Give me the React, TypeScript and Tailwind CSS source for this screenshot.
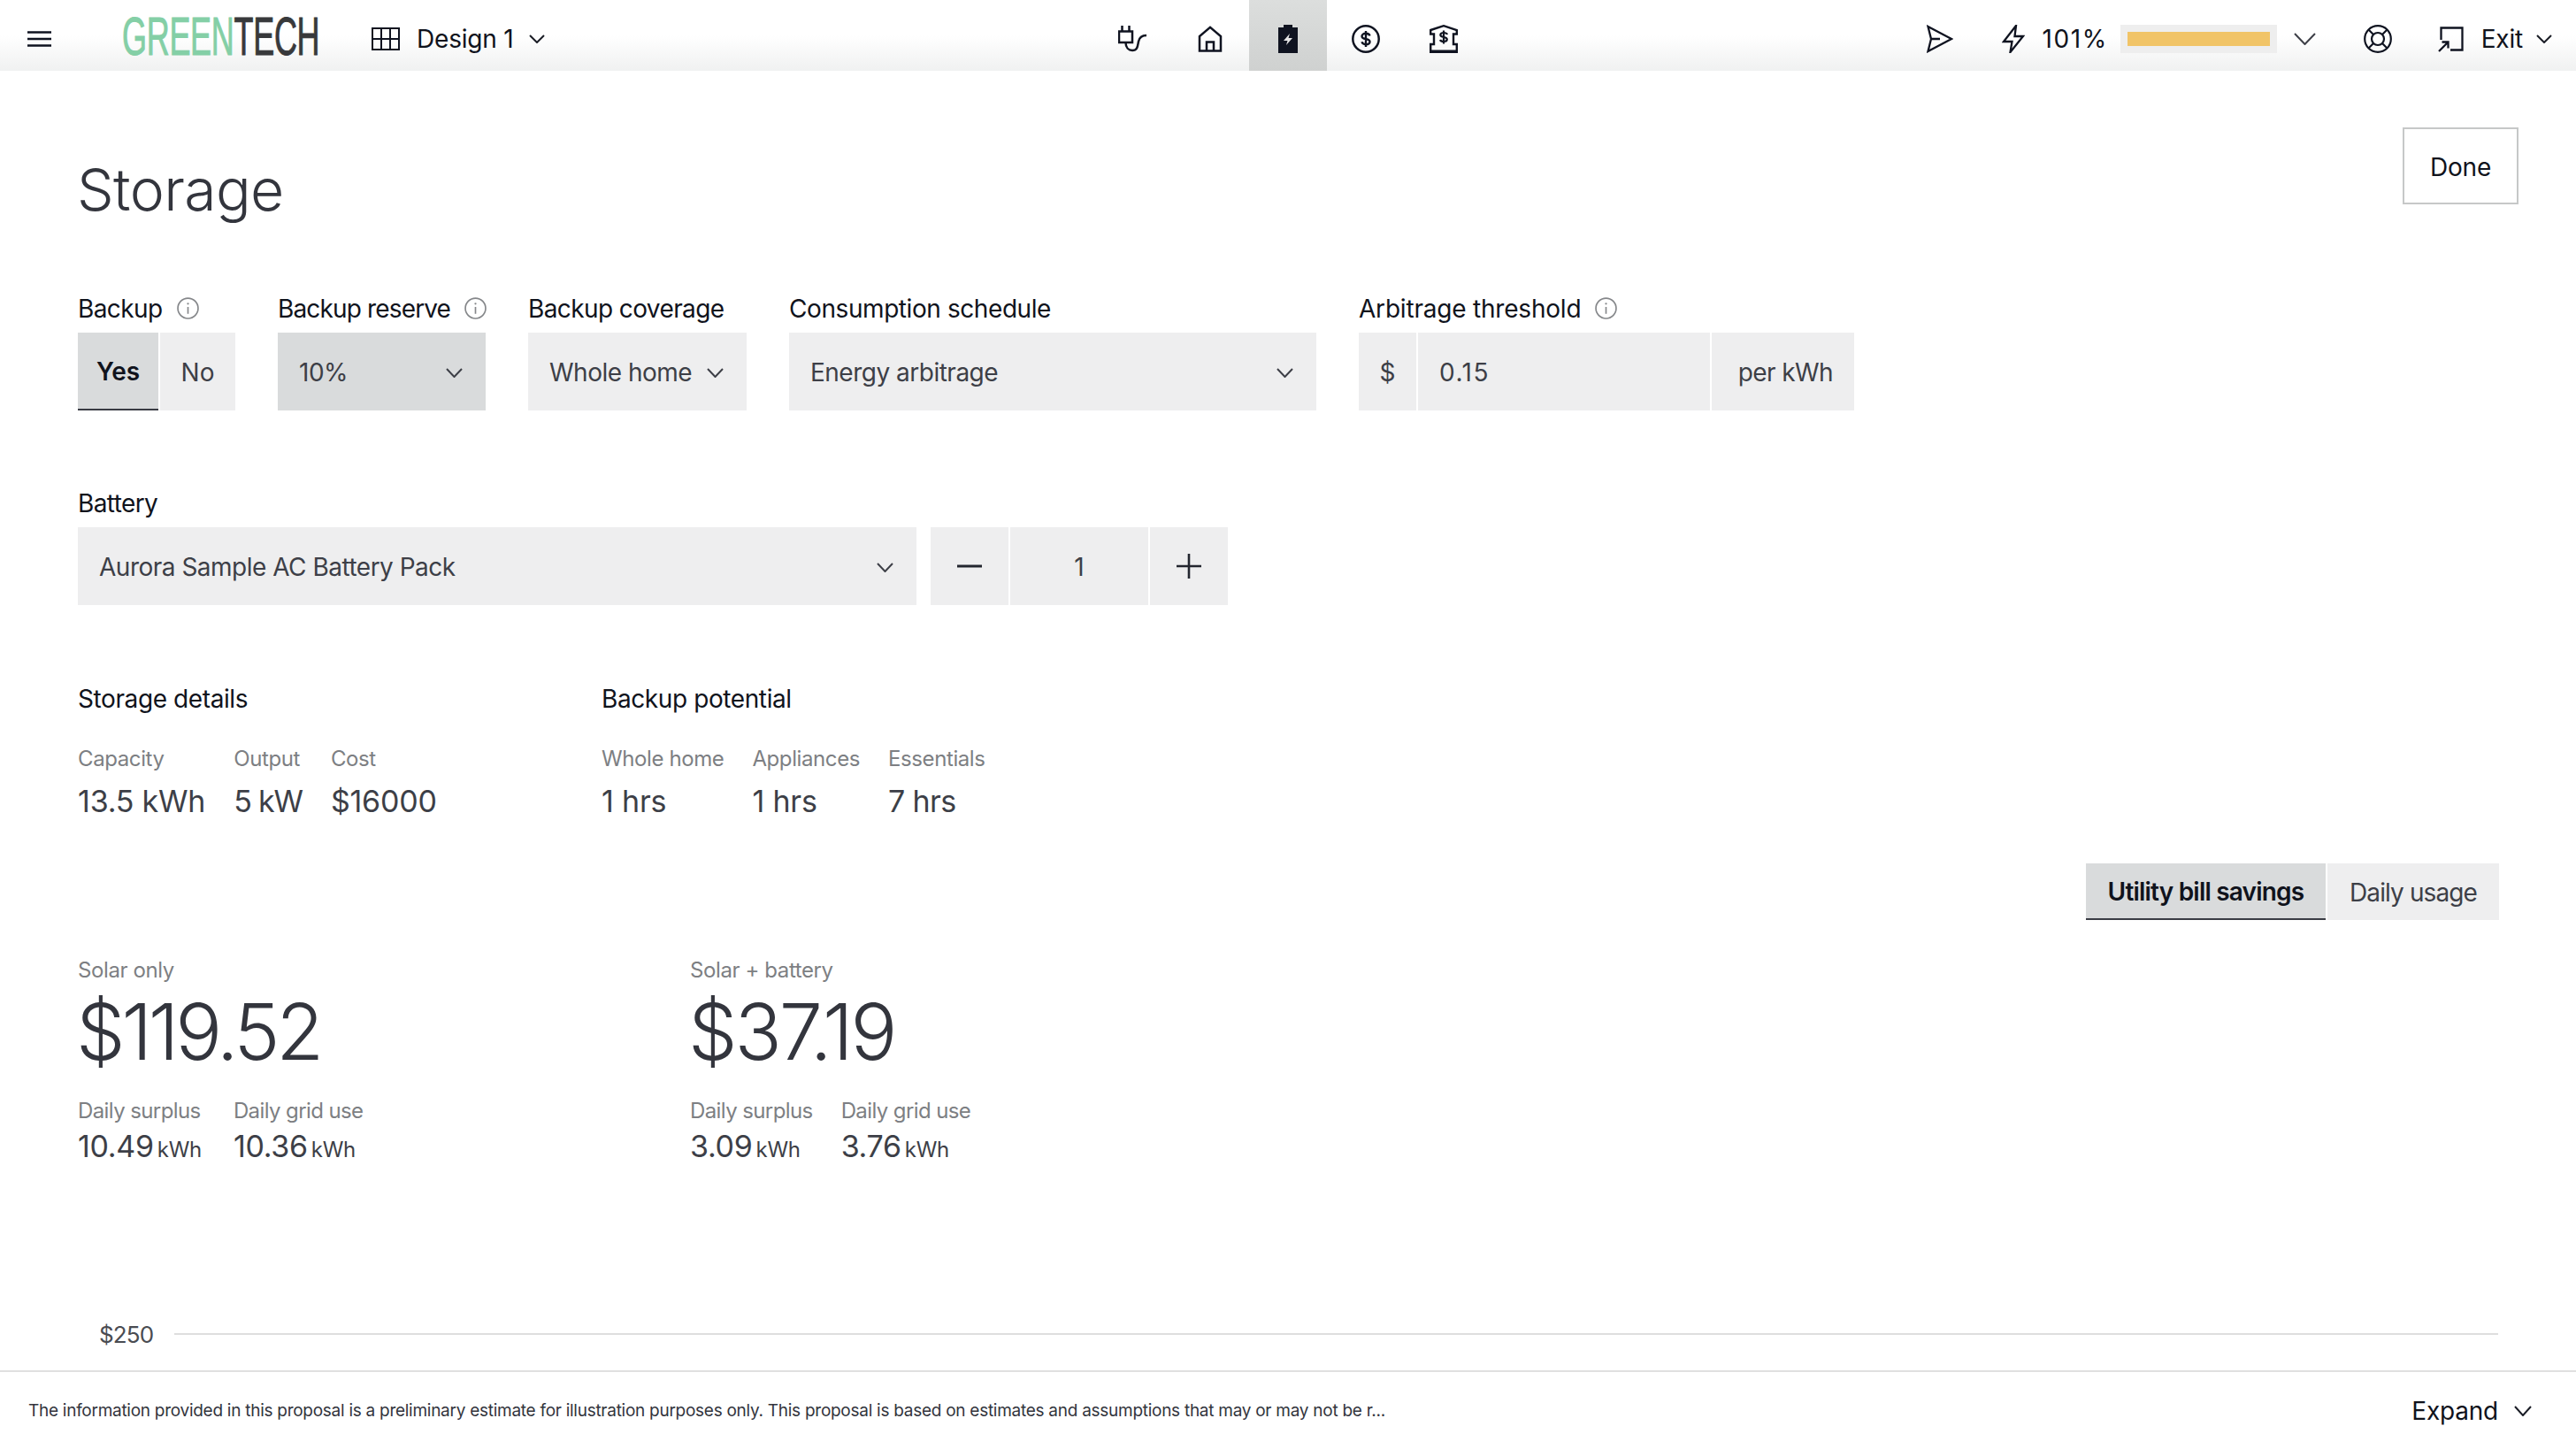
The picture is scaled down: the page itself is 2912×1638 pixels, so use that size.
import React from "react";

const F = "font-['Inter','Noto_Sans',sans-serif]";

function Chevron({ w = 18, h = 10, color = "#1a1d26", sw = 2 }: { w?: number; h?: number; color?: string; sw?: number }) {
  return (
    <svg width={w} height={h} viewBox={`0 0 ${w} ${h}`} fill="none" className="shrink-0">
      <path d={`M1 1L${w / 2} ${h - 1}L${w - 1} 1`} stroke={color} strokeWidth={sw} />
    </svg>
  );
}

function Info() {
  return (
    <svg width="25" height="25" viewBox="0 0 24 24" fill="none" className="shrink-0">
      <circle cx="12" cy="12" r="11" stroke="#85878a" strokeWidth="1.6" />
      <path d="M12 10.5V18" stroke="#85878a" strokeWidth="1.6" />
      <circle cx="12" cy="7" r="1.1" fill="#85878a" />
    </svg>
  );
}

const Label = ({ text, info, track = "tracking-[-0.6px]" }: { text: string; info?: boolean; track?: string }) => (
  <div className={`h-[35px] mb-[9px] flex items-center gap-[16px] text-[28px] leading-[35px] text-[#10131c] ${track} whitespace-nowrap`}>
    <span>{text}</span>
    {info && <span className="-mt-[3px] flex"><Info /></span>}
  </div>
);

const Sel = ({ text, w, dark }: { text: string; w: string; dark?: boolean }) => (
  <div className={`${w} h-[88px] ${dark ? "bg-[#d9dbdc]" : "bg-[#eeeeef]"} flex items-center justify-between pl-[24px] pr-[26px] pt-[2px] text-[28px] text-[#3d3f47] tracking-[-0.5px] whitespace-nowrap`}>
    <span>{text}</span>
    <Chevron w={19} h={11} color="#3d3f47" />
  </div>
);

const Stat = ({ label, value, track = "tracking-[-0.2px]" }: { label: string; value: string; track?: string }) => (
  <div className="flex flex-col">
    <div className="h-[32px] leading-[32px] text-[24px] text-[#7d7f83] tracking-[-0.4px] whitespace-nowrap">{label}</div>
    <div className={`mt-[12px] h-[40px] leading-[40px] text-[34px] text-[#3d3f47] ${track} whitespace-nowrap`}>{value}</div>
  </div>
);

const Small = ({ label, value }: { label: string; value: string }) => (
  <div className="flex flex-col">
    <div className="h-[32px] leading-[32px] text-[24px] text-[#7d7f83] tracking-[-0.6px] whitespace-nowrap">{label}</div>
    <div className="mt-[4px] h-[40px] leading-[40px] text-[34px] text-[#3d3f47] tracking-[-0.3px] whitespace-nowrap">
      {value}
      <span className="ml-[4px] text-[24px] tracking-[-0.3px]">kWh</span>
    </div>
  </div>
);

const Summary = ({ title, amount, a, b, track, gap }: { title: string; amount: string; a: string; b: string; track: string; gap: string }) => (
  <div className="w-[692px] shrink-0">
    <div className="h-[32px] leading-[32px] text-[24px] text-[#7d7f83] tracking-[-0.4px]">{title}</div>
    <div className={`mt-[7px] -ml-[2px] h-[92px] leading-[92px] text-[88px] font-light text-[#33353d] ${track} whitespace-nowrap`}>{amount}</div>
    <div className={`mt-[28px] flex ${gap}`}>
      <Small label="Daily surplus" value={a} />
      <Small label="Daily grid use" value={b} />
    </div>
  </div>
);

const ink = "#0f1320";

const NavTab = ({ active, children }: { active?: boolean; children: React.ReactNode }) => (
  <div className={`w-[88px] h-[80px] pt-[8px] flex items-center justify-center ${active ? "bg-gradient-to-b from-[#dcdedd] to-[#cfd1d0]" : ""}`}>{children}</div>
);

export default function App() {
  return (
    <div className={`${F} w-[2912px] h-[1638px] bg-white flex flex-col overflow-hidden`}>
      <header className="h-[80px] shrink-0 flex items-center bg-gradient-to-b from-white from-50% to-[#f0f1f1]">
        <div className="w-[1236px] shrink-0 flex items-center pl-[31px] pt-[8px]">
          <svg width="27" height="18" viewBox="0 0 27 18" fill="none">
            <path d="M0 1.5H27M0 9H27M0 16.5H27" stroke={ink} strokeWidth="2.5" />
          </svg>
          <div className="ml-[80px] w-[222px] h-[62px] -mt-[7px] overflow-visible">
            <div className="font-['Liberation_Sans',sans-serif] origin-left scale-x-[0.59] text-[61px] leading-[62px] tracking-[-0.5px] whitespace-nowrap [-webkit-text-stroke:1px_currentColor]">
              <span className="text-[#84cfa6]">GREEN</span>
              <span className="text-[#38393b]">TECH</span>
            </div>
          </div>
          <svg width="32" height="26" viewBox="0 0 32 26" fill="none" className="ml-[60px]">
            <path d="M1 1H31V25H1ZM11 1V25M21 1V25M1 13H31" stroke={ink} strokeWidth="2" />
          </svg>
          <span className="ml-[19px] text-[28px] text-[#10131c] tracking-[-0.2px] whitespace-nowrap">Design 1</span>
          <span className="ml-[18px] flex"><Chevron /></span>
        </div>

        <NavTab>
          <svg width="32" height="32" viewBox="0 0 32 32" fill="none">
            <path d="M1 7.5H16V20H1ZM4.5 1V7.5M12.5 1V7.5" stroke={ink} strokeWidth="2.5" />
            <path d="M8.5 20C8.5 26 12 29 16 29C22 29 22 24 23 19C24 14 27 12 32 12" stroke={ink} strokeWidth="2.5" />
          </svg>
        </NavTab>
        <NavTab>
          <svg width="28" height="30" viewBox="0 0 28 30" fill="none">
            <path d="M2 28.5V12L14 1.8L26 12V28.5ZM10 28.5V18.5H18V28.5" stroke={ink} strokeWidth="2.5" />
          </svg>
        </NavTab>
        <NavTab active>
          <svg width="22" height="32" viewBox="0 0 22 32">
            <path d="M6 0H16V3H22V32H0V3H6Z" fill={ink} />
            <path d="M13 10L6 18H10.5L9 23L16 15H11.5Z" fill="#e6e6e6" />
          </svg>
        </NavTab>
        <NavTab>
          <svg width="32" height="32" viewBox="0 0 32 32" fill="none">
            <circle cx="16" cy="16" r="14.7" stroke={ink} strokeWidth="2.5" />
            <path d="M20.5 12.5C20 10.5 18 9.8 16 9.8C13.5 9.8 11.5 11 11.5 13C11.5 17.5 20.5 14.8 20.5 19C20.5 21 18.5 22.2 16 22.2C13.8 22.2 12 21.3 11.5 19.3M16 7V25" stroke={ink} strokeWidth="2.4" />
          </svg>
        </NavTab>
        <NavTab>
          <svg width="32" height="32" viewBox="0 0 32 32" fill="none">
            <path d="M1.2 6L16 1.2L30.8 6V10.5H27V22H30.8V30.8H1.2V22H5V10.5H1.2Z" stroke={ink} strokeWidth="2.4" />
            <path d="M1 30H31" stroke={ink} strokeWidth="3" />
            <path d="M20 11C19.5 9.5 18 9 16 9C14 9 12.3 10 12.3 11.5C12.3 15 19.8 13 19.8 16.5C19.8 18 18 19 16 19C14 19 12.5 18.3 12 17M16 6.5V21.5" stroke={ink} strokeWidth="2.2" />
          </svg>
        </NavTab>

        <div className="flex-1 flex items-center justify-end pr-[27px] pt-[8px]">
          <svg width="30" height="32" viewBox="0 0 30 32" fill="none">
            <path d="M1.5 2L28 16L1.5 30L5 16ZM5 16H15" stroke={ink} strokeWidth="2.3" />
          </svg>
          <svg width="26" height="32" viewBox="0 0 26 32" fill="none" className="ml-[55px]">
            <path d="M16 1L2 19H11.5L9.5 31L24 13H14.5Z" stroke={ink} strokeWidth="2.3" />
          </svg>
          <span className="ml-[19px] text-[28px] text-[#10131c] tracking-[1.6px] whitespace-nowrap">101%</span>
          <div className="ml-[14px] w-[177px] h-[32px] bg-[#eeeeee] flex items-center justify-center">
            <div className="w-[161px] h-[16px] bg-[#f1c467]" />
          </div>
          <span className="ml-[19px] flex"><Chevron w={25} h={14} color="#3d3f47" /></span>
          <svg width="32" height="32" viewBox="0 0 32 32" fill="none" className="ml-[54px]">
            <circle cx="16" cy="16" r="14.8" stroke={ink} strokeWidth="2.2" />
            <circle cx="16" cy="16" r="7" stroke={ink} strokeWidth="2.2" />
            <path d="M5.5 5.5L11 11M26.5 5.5L21 11M5.5 26.5L11 21M26.5 26.5L21 21" stroke={ink} strokeWidth="2.2" />
          </svg>
          <svg width="29" height="29" viewBox="0 0 29 29" fill="none" className="ml-[52px]">
            <path d="M3.5 15V1.5H27.5V26.5H14" stroke={ink} strokeWidth="2.3" />
            <path d="M1 28L11 18M4.5 17.5H11.5V24.5" stroke={ink} strokeWidth="2.3" />
          </svg>
          <span className="ml-[20px] text-[28px] text-[#10131c] tracking-[-0.2px]">Exit</span>
          <span className="ml-[15px] flex"><Chevron /></span>
        </div>
      </header>

      <main className="flex-1 overflow-hidden pl-[88px] pr-[65px]">
        <div className="h-[151px] pt-[64px] flex justify-between items-start">
          <h1 className="mt-[30px] -ml-[1px] text-[66px] leading-[80px] font-light text-[#33353d] tracking-[-0.6px]">Storage</h1>
          <button className="w-[131px] h-[87px] pt-[2px] border-2 border-[#c6c8c8] bg-white text-[28px] text-[#10131c] tracking-[-0.2px]">Done</button>
        </div>

        <div className="mt-[101px] flex gap-[48px]">
          <div className="w-[178px]">
            <Label text="Backup" info />
            <div className="flex gap-[2px] h-[88px] text-[28px]">
              <div className="w-[91px] pt-[2px] bg-[#d9dbdc] border-b-2 border-[#3a3c44] flex items-center justify-center font-semibold text-[#10131c]">Yes</div>
              <div className="w-[85px] pt-[2px] bg-[#eeeeef] flex items-center justify-center text-[#3d3f47]">No</div>
            </div>
          </div>
          <div className="w-[235px]">
            <Label text="Backup reserve" info track="tracking-[-0.85px]" />
            <Sel text="10%" w="w-[235px]" dark />
          </div>
          <div className="w-[247px]">
            <Label text="Backup coverage" />
            <Sel text="Whole home" w="w-[247px]" />
          </div>
          <div className="w-[596px]">
            <Label text="Consumption schedule" track="tracking-[-0.42px]" />
            <Sel text="Energy arbitrage" w="w-[596px]" />
          </div>
          <div className="w-[560px]">
            <Label text="Arbitrage threshold" info track="tracking-[-0.2px]" />
            <div className="flex gap-[2px] h-[88px] text-[28px] text-[#3d3f47]">
              <div className="w-[65px] pt-[2px] bg-[#eeeeef] flex items-center justify-center">$</div>
              <div className="w-[330px] pt-[2px] bg-[#eeeeef] flex items-center pl-[24px] tracking-[1.5px]">0.15</div>
              <div className="w-[161px] pt-[2px] pr-[24px] bg-[#eeeeef] flex items-center justify-end tracking-[-0.6px]">per kWh</div>
            </div>
          </div>
        </div>

        <div className="mt-[88px]">
          <Label text="Battery" />
          <div className="flex gap-[16px]">
            <Sel text="Aurora Sample AC Battery Pack" w="w-[948px]" />
            <div className="flex gap-[2px] h-[88px] text-[28px] text-[#3d3f47]">
              <div className="w-[88px] bg-[#eeeeef] flex items-center justify-center">
                <svg width="28" height="4" viewBox="0 0 28 4"><path d="M0 2H28" stroke="#23262f" strokeWidth="3" /></svg>
              </div>
              <div className="w-[156px] pt-[2px] bg-[#eeeeef] flex items-center justify-center">1</div>
              <div className="w-[88px] bg-[#eeeeef] flex items-center justify-center">
                <svg width="28" height="28" viewBox="0 0 28 28"><path d="M0 14H28M14 0V28" stroke="#23262f" strokeWidth="2.6" /></svg>
              </div>
            </div>
          </div>
        </div>

        <div className="mt-[88px] flex">
          <div className="w-[592px] shrink-0">
            <div className="h-[36px] leading-[36px] text-[28px] text-[#10131c] tracking-[-0.4px]">Storage details</div>
            <div className="mt-[34px] flex gap-[32px]">
              <Stat label="Capacity" value="13.5 kWh" />
              <Stat label="Output" value="5 kW" track="tracking-[-1.2px]" />
              <Stat label="Cost" value="$16000" />
            </div>
          </div>
          <div>
            <div className="h-[36px] leading-[36px] text-[28px] text-[#10131c] tracking-[-0.4px]">Backup potential</div>
            <div className="mt-[34px] flex gap-[32px]">
              <Stat label="Whole home" value="1 hrs" />
              <Stat label="Appliances" value="1 hrs" />
              <Stat label="Essentials" value="7 hrs" track="tracking-[-0.6px]" />
            </div>
          </div>
        </div>

        <div className="mt-[50px] mr-[22px] flex justify-end gap-[2px] h-[64px] text-[28px]">
          <div className="w-[271px] pt-[2px] bg-[#d9dbdc] border-b-2 border-[#3a3c44] flex items-center justify-center font-semibold text-[#10131c] tracking-[-0.8px]">Utility bill savings</div>
          <div className="w-[194px] pt-[2px] bg-[#eeeeef] flex items-center justify-center text-[#3d3f47] tracking-[-0.9px]">Daily usage</div>
        </div>

        <div className="mt-[41px] flex">
          <Summary title="Solar only" amount="$119.52" a="10.49" b="10.36" track="tracking-[-4.2px]" gap="gap-[36px]" />
          <Summary title="Solar + battery" amount="$37.19" a="3.09" b="3.76" track="tracking-[-3.1px]" gap="gap-[32px]" />
        </div>

        <div className="mt-[174px] mr-[23px] h-[36px] flex items-center gap-[24px]">
          <span className="ml-[24px] text-[26px] text-[#4a4c52] tracking-[-0.9px]">$250</span>
          <div className="flex-1 h-[2px] bg-[#dedede]" />
        </div>
      </main>

      <footer className="h-[89px] shrink-0 border-t-2 border-[#e0e0e0] flex items-center justify-between pl-[32px] pr-[50px]">
        <span className="pt-[2px] text-[19px] text-[#33353d] tracking-[-0.27px] whitespace-nowrap">
          The information provided in this proposal is a preliminary estimate for illustration purposes only. This proposal is based on estimates and assumptions that may or may not be r...
        </span>
        <span className="flex items-center gap-[18px] text-[28px] text-[#10131c] tracking-[-0.2px]">
          Expand
          <Chevron w={20} h={12} />
        </span>
      </footer>
    </div>
  );
}
